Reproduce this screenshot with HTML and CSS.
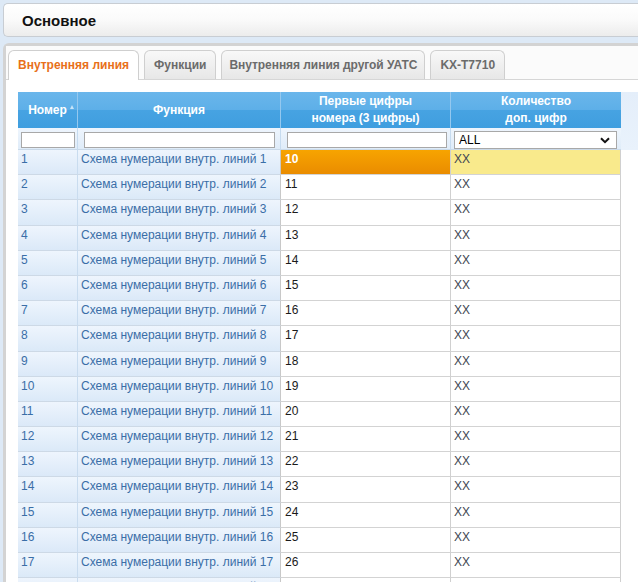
FILE: index.html
```html
<!DOCTYPE html>
<html lang="ru">
<head>
<meta charset="utf-8">
<title>Основное</title>
<link rel="stylesheet" href="styles.css">
</head>
<body>
<div class="page">
  <div class="topbar">Основное</div>
  <div class="panel">
    <div class="tabs">
      <div class="tab active">Внутренняя линия</div>
      <div class="tab">Функции</div>
      <div class="tab narrow">Внутренняя линия другой УАТС</div>
      <div class="tab">KX-T7710</div>
    </div>
    <div class="grid-wrap">
      <table class="grid">
        <colgroup>
          <col class="c1"><col class="c2"><col class="c3"><col class="c4">
        </colgroup>
        <thead>
          <tr class="hdr">
            <th class="sortable">Номер<span class="sort"></span></th>
            <th>Функция</th>
            <th>Первые цифры<br>номера (3 цифры)</th>
            <th>Количество<br>доп. цифр</th>
          </tr>
          <tr class="flt">
            <td><input class="f f1" type="text"></td>
            <td><input class="f f2" type="text"></td>
            <td><input class="f f3" type="text"></td>
            <td class="flt-sel"><div class="sel"><span>ALL</span><svg width="10" height="7" viewBox="0 0 10 7"><path d="M1 1.2 L5 5.2 L9 1.2" fill="none" stroke="#111" stroke-width="2"/></svg></div></td>
          </tr>
        </thead>
        <tbody>
          <tr class="r"><td class="n">1</td><td class="fn">Схема нумерации внутр. линий 1</td><td class="v sel-cell">10</td><td class="x hl">XX</td></tr>
          <tr class="r"><td class="n">2</td><td class="fn">Схема нумерации внутр. линий 2</td><td class="v">11</td><td class="x">XX</td></tr>
          <tr class="r"><td class="n">3</td><td class="fn">Схема нумерации внутр. линий 3</td><td class="v">12</td><td class="x">XX</td></tr>
          <tr class="r"><td class="n">4</td><td class="fn">Схема нумерации внутр. линий 4</td><td class="v">13</td><td class="x">XX</td></tr>
          <tr class="r"><td class="n">5</td><td class="fn">Схема нумерации внутр. линий 5</td><td class="v">14</td><td class="x">XX</td></tr>
          <tr class="r"><td class="n">6</td><td class="fn">Схема нумерации внутр. линий 6</td><td class="v">15</td><td class="x">XX</td></tr>
          <tr class="r"><td class="n">7</td><td class="fn">Схема нумерации внутр. линий 7</td><td class="v">16</td><td class="x">XX</td></tr>
          <tr class="r"><td class="n">8</td><td class="fn">Схема нумерации внутр. линий 8</td><td class="v">17</td><td class="x">XX</td></tr>
          <tr class="r"><td class="n">9</td><td class="fn">Схема нумерации внутр. линий 9</td><td class="v">18</td><td class="x">XX</td></tr>
          <tr class="r"><td class="n">10</td><td class="fn">Схема нумерации внутр. линий 10</td><td class="v">19</td><td class="x">XX</td></tr>
          <tr class="r"><td class="n">11</td><td class="fn">Схема нумерации внутр. линий 11</td><td class="v">20</td><td class="x">XX</td></tr>
          <tr class="r"><td class="n">12</td><td class="fn">Схема нумерации внутр. линий 12</td><td class="v">21</td><td class="x">XX</td></tr>
          <tr class="r"><td class="n">13</td><td class="fn">Схема нумерации внутр. линий 13</td><td class="v">22</td><td class="x">XX</td></tr>
          <tr class="r"><td class="n">14</td><td class="fn">Схема нумерации внутр. линий 14</td><td class="v">23</td><td class="x">XX</td></tr>
          <tr class="r"><td class="n">15</td><td class="fn">Схема нумерации внутр. линий 15</td><td class="v">24</td><td class="x">XX</td></tr>
          <tr class="r"><td class="n">16</td><td class="fn">Схема нумерации внутр. линий 16</td><td class="v">25</td><td class="x">XX</td></tr>
          <tr class="r"><td class="n">17</td><td class="fn">Схема нумерации внутр. линий 17</td><td class="v">26</td><td class="x">XX</td></tr>
          <tr class="r"><td class="n">18</td><td class="fn">Схема нумерации внутр. линий 18</td><td class="v">27</td><td class="x">XX</td></tr>
        </tbody>
      </table>
    </div>
  </div>
</div>
</body>
</html>
```

FILE: styles.css
```css
html, body {
  margin: 0;
  padding: 0;
  height: 582px;
  overflow: hidden;
}
body {
  background: #dde9f6;
  font-family: "Liberation Sans", Arial, sans-serif;
  font-size: 12px;
  color: #222;
}
.page {
  padding: 3px 0 0 3px;
}
.topbar {
  height: 32px;
  border: 1px solid #c8cdd3;
  border-right: none;
  border-radius: 5px 0 0 5px;
  background: linear-gradient(#ffffff 0%, #fafafa 50%, #ececec 100%);
  display: flex;
  align-items: center;
  padding-left: 18px;
  font-size: 15px;
  font-weight: bold;
  color: #111;
}
.panel {
  margin-top: 6px;
  border-top: 3px solid #d3d3d3;
  border-left: 3px solid #d3d3d3;
  border-radius: 6px 0 0 0;
  background: #ffffff;
  height: 600px;
}
.tabs {
  display: flex;
  gap: 5px;
  padding: 4px 0 0 2px;
  height: 29px;
  border-bottom: 1px solid #d6d6d6;
  background: #fbfbfb;
}
.tab {
  height: 28px;
  line-height: 29px;
  padding: 0 9px;
  border: 1px solid #cfcfcf;
  border-bottom: none;
  border-radius: 6px 6px 0 0;
  background: linear-gradient(#f8f8f8, #e7e7e7);
  color: #6b6b6b;
  font-weight: bold;
  font-size: 12px;
  white-space: nowrap;
}
.tab.narrow { padding: 0 7px; letter-spacing: -0.05px; }
.tab.active {
  background: #ffffff;
  color: #e8701a;
  height: 29px;
  margin-bottom: -1px;
  padding: 0 9px;
}
.grid-wrap {
  margin: 12px 0 0 12px;
  background: linear-gradient(#e4eefa, #e9f2fc) no-repeat;
  background-size: 100% 58px;
}
.grid {
  border-collapse: separate;
  border-spacing: 0;
  table-layout: fixed;
  width: 603px;
}
.c1 { width: 60px; }
.c2 { width: 203px; }
.c3 { width: 170px; }
.c4 { width: 170px; }
.hdr th {
  height: 36px;
  padding: 0;
  box-sizing: border-box;
  background: linear-gradient(#6ab6eb 0%, #5dafe8 50%, #47a3e2 50%, #3f9edf 100%);
  color: #fff;
  font-weight: bold;
  font-size: 12px;
  line-height: 17px;
  text-align: center;
  border-right: 1px solid #94c8ef;
}
.hdr th:last-child { border-right: none; }
.sortable { position: relative; }
.sort {
  position: absolute;
  right: 3px;
  top: 13px;
  width: 0;
  height: 0;
  border-left: 2px solid transparent;
  border-right: 2px solid transparent;
  border-bottom: 4px solid #c8e4f8;
}
.flt td {
  height: 22px;
  padding: 4px 0 0;
  box-sizing: border-box;
  background: linear-gradient(#eef5fd, #dfecf9);
  border-right: 1px solid #c6dbef;
  border-bottom: 1px solid #c9d9e9;
  vertical-align: top;
}
.flt td.flt-sel { padding-top: 3px; }
.flt td:last-child { border-right: none; }
.f {
  display: block;
  box-sizing: border-box;
  height: 16px;
  border: 1px solid #a8a8a8;
  background: #fff;
  padding: 0;
  margin: 0;
}
.f1 { width: 54px; margin-left: 3px; }
.f2 { width: 191px; margin-left: 6px; }
.f3 { width: 160px; margin-left: 6px; }
.sel {
  box-sizing: border-box;
  width: 163px;
  height: 18px;
  margin-left: 3px;
  border: 1px solid #a8a8a8;
  background: #fff;
  display: flex;
  align-items: center;
  justify-content: space-between;
  padding: 0 6px 0 4px;
  font-size: 12px;
  color: #000;
}
.r { height: 25.2px; }
.r td {
  padding: 2px 3px 0;
  box-sizing: border-box;
  vertical-align: top;
  line-height: 14px;
  border-bottom: 1px solid #d3d3d3;
  white-space: nowrap;
  overflow: hidden;
}
.r .n, .r .fn {
  background: linear-gradient(#eef5fd, #dbe9f8);
  color: #3a6ea7;
  border-bottom-color: #cdd9e6;
}
.r .n { border-right: 1px solid #c9dcef; }
.r .fn { border-right: 1px solid #c8c8c8; }
.r .v {
  background: #fff;
  color: #1a1a1a;
  padding-left: 4px;
  border-right: 1px solid #d0d0d0;
}
.r .x {
  background: #fff;
  color: #3e4652;
  border-right: 1px solid #d0d0d0;
}
.r .v.sel-cell {
  background: linear-gradient(#f7a400, #ea8c00);
  color: #fff;
  font-weight: bold;
}
.r .x.hl {
  background: #f9ea8c;
}
```
